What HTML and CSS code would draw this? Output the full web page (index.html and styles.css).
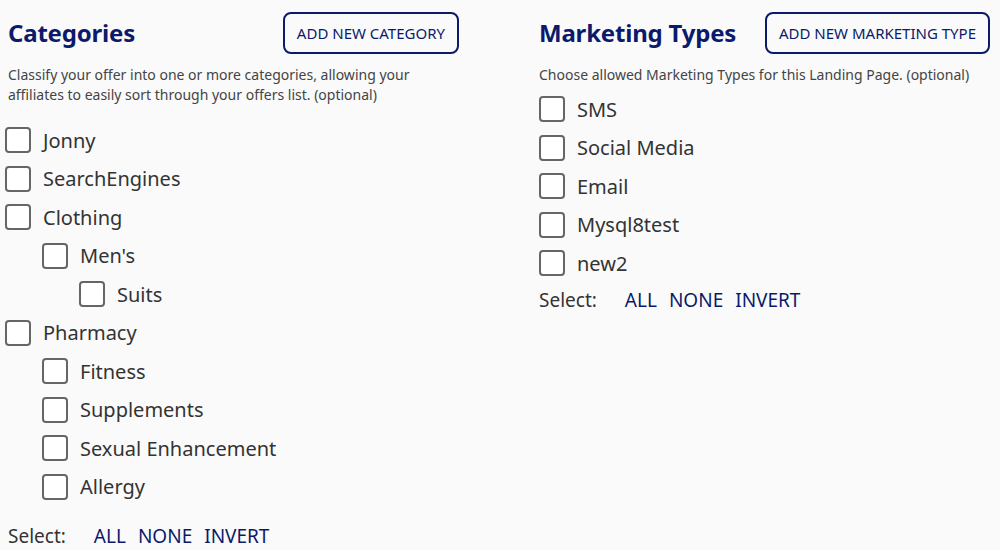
FILE: index.html
```html
<!DOCTYPE html>
<html lang="en">
<head>
    <meta charset="UTF-8">
    <title>Offer Settings</title>
    <link rel="stylesheet" href="styles.css">
</head>
<body>
    <div class="columns">
        <section class="panel">
            <div class="panel-head">
                <h2>Categories</h2>
                <button class="outline-btn">Add New Category</button>
            </div>
            <p class="hint">Classify your offer into one or more categories, allowing your affiliates to easily sort through your offers list. (optional)</p>
            <ul class="check-list cat-list">
                <li><label><span class="box"></span>Jonny</label></li>
                <li><label><span class="box"></span>SearchEngines</label></li>
                <li><label><span class="box"></span>Clothing</label>
                    <ul class="check-list">
                        <li><label><span class="box"></span>Men's</label>
                            <ul class="check-list">
                                <li><label><span class="box"></span>Suits</label></li>
                            </ul>
                        </li>
                    </ul>
                </li>
                <li><label><span class="box"></span>Pharmacy</label>
                    <ul class="check-list">
                        <li><label><span class="box"></span>Fitness</label></li>
                        <li><label><span class="box"></span>Supplements</label></li>
                        <li><label><span class="box"></span>Sexual Enhancement</label></li>
                        <li><label><span class="box"></span>Allergy</label></li>
                    </ul>
                </li>
            </ul>
            <div class="select-row cat-select">
                <span>Select:</span>
                <a href="#">ALL</a>
                <a href="#">NONE</a>
                <a href="#">INVERT</a>
            </div>
        </section>

        <section class="panel">
            <div class="panel-head">
                <h2>Marketing Types</h2>
                <button class="outline-btn">Add New Marketing Type</button>
            </div>
            <p class="hint">Choose allowed Marketing Types for this Landing Page. (optional)</p>
            <ul class="check-list">
                <li><label><span class="box"></span>SMS</label></li>
                <li><label><span class="box"></span>Social Media</label></li>
                <li><label><span class="box"></span>Email</label></li>
                <li><label><span class="box"></span>Mysql8test</label></li>
                <li><label><span class="box"></span>new2</label></li>
            </ul>
            <div class="select-row">
                <span>Select:</span>
                <a href="#">ALL</a>
                <a href="#">NONE</a>
                <a href="#">INVERT</a>
            </div>
        </section>
    </div>
</body>
</html>
```

FILE: styles.css
```css
body {
    margin: 0;
    background-color: #fafafa;
    font-family: "Noto Sans", "Open Sans", sans-serif;
    color: #333;
}
.columns {
    display: grid;
    grid-template-columns: 451px 451px;
    column-gap: 80px;
    padding: 12px 0 0 8px;
}
.panel-head {
    display: flex;
    justify-content: space-between;
    align-items: center;
    height: 41px;
}
.panel-head h2 {
    margin: 0;
    font-size: 24px;
    font-weight: bold;
    color: #0b1a6b;
    letter-spacing: -0.2px;
}
.outline-btn {
    height: 42px;
    padding: 0 12px;
    background: none;
    border: 2px solid #0b1a6b;
    border-radius: 8px;
    color: #0b1a6b;
    font-family: inherit;
    font-size: 15px;
    text-transform: uppercase;
    cursor: pointer;
}
.hint {
    margin: 12px 0 5px;
    font-size: 14px;
    line-height: 20px;
    color: #444;
}
.check-list {
    list-style: none;
    margin: 0;
    padding: 0;
}
.cat-list {
    margin: 16px 0 0 -3px;
}
.check-list .check-list {
    margin: 0;
    padding-left: 37px;
}
.check-list label {
    display: flex;
    align-items: center;
    height: 38.5px;
    font-size: 20px;
    color: #333;
}
.box {
    width: 22px;
    height: 22px;
    margin-right: 12px;
    border: 2px solid #666;
    border-radius: 4px;
    background: #fff;
}
.select-row {
    display: flex;
    gap: 12px;
    margin-top: 4px;
    font-size: 19px;
}
.cat-select {
    margin-top: 17px;
}
.select-row span {
    margin-right: 16px;
}
.select-row a {
    color: #0b1a6b;
    text-decoration: none;
}
```
